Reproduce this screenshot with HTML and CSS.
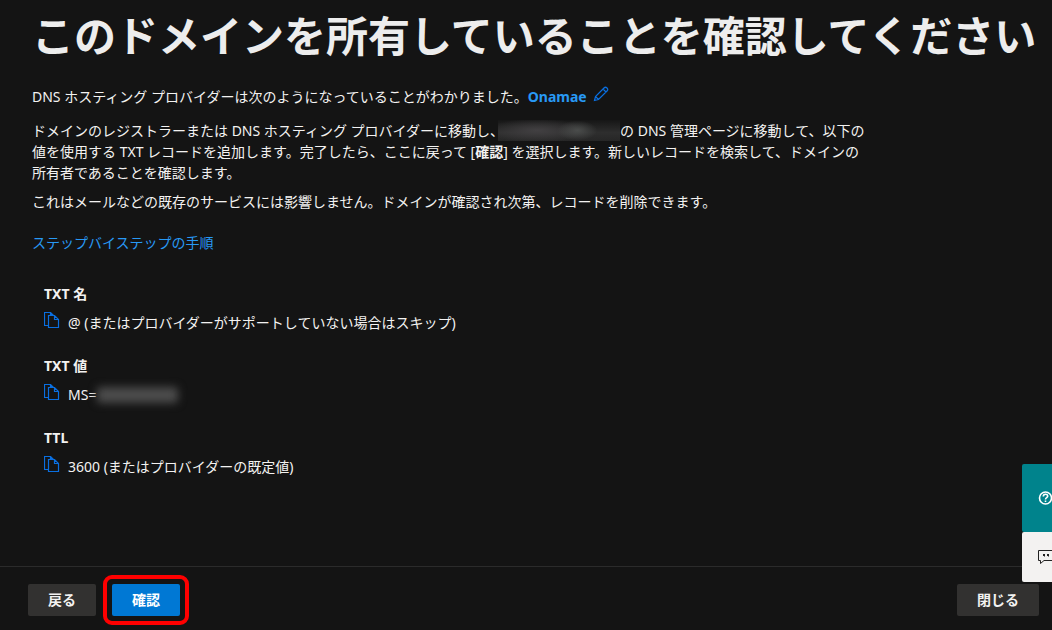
FILE: index.html
```html
<!DOCTYPE html>
<html lang="ja">
<head>
<meta charset="UTF-8">
<meta name="viewport" content="width=device-width, initial-scale=1.0">
<title>ドメインの確認</title>
<link rel="stylesheet" href="styles.css">
</head>
<body>
<svg class="sprite" aria-hidden="true">
    <symbol id="copy" viewBox="0 0 16 16">
        <path d="M4.5 13.500H.5V.5h6l3 3M4.500 3.500h6l4 4v8h-10zM10.500 3.500v4h4M6.500 .5v3" />
    </symbol>
</svg>

<main class="content">
    <h1 class="title">このドメインを所有していることを確認してください</h1>

    <div class="provider">
        <span>DNS ホスティング プロバイダーは次のようになっていることがわかりました。</span>
        <a href="#" class="provider-name">Onamae</a>
        <button type="button" class="icon-btn" aria-label="編集">
            <svg class="icon" viewBox="0 0 16 16"><path d="M1.500 14.500l1-4 8.500-8.500q1.500-1.500 3 0t0 3L5.500 13.500zM2.500 10.500l3 3M10 3l3 3" /></svg>
        </button>
    </div>

    <div class="description">
        <p>ドメインのレジストラーまたは DNS ホスティング プロバイダーに移動し、<span class="masked masked-domain"></span>の DNS 管理ページに移動して、以下の値を使用する TXT レコードを追加します。完了したら、ここに戻って [<b>確認</b>] を選択します。新しいレコードを検索して、ドメインの所有者であることを確認します。</p>
        <p>これはメールなどの既存のサービスには影響しません。ドメインが確認され次第、レコードを削除できます。</p>
    </div>

    <a href="#" class="steps">ステップバイステップの手順</a>

    <dl class="records">
        <div class="record">
            <dt>TXT 名</dt>
            <dd>
                <button type="button" class="icon-btn" aria-label="コピー"><svg class="icon"><use href="#copy" /></svg></button>
                <span class="value">@ (またはプロバイダーがサポートしていない場合はスキップ)</span>
            </dd>
        </div>
        <div class="record">
            <dt>TXT 値</dt>
            <dd>
                <button type="button" class="icon-btn" aria-label="コピー"><svg class="icon"><use href="#copy" /></svg></button>
                <span class="value">MS=<span class="masked masked-value"></span></span>
            </dd>
        </div>
        <div class="record">
            <dt>TTL</dt>
            <dd>
                <button type="button" class="icon-btn" aria-label="コピー"><svg class="icon"><use href="#copy" /></svg></button>
                <span class="value">3600 (またはプロバイダーの既定値)</span>
            </dd>
        </div>
    </dl>
</main>

<footer class="footer">
    <button type="button" class="btn">戻る</button>
    <span class="highlight"><button type="button" class="btn btn-primary">確認</button></span>
    <button type="button" class="btn btn-close">閉じる</button>
</footer>

<aside class="side">
    <button type="button" class="side-btn side-help" aria-label="ヘルプ">
        <svg viewBox="0 0 16 16"><circle cx="7.500" cy="8" r="6" /><path d="M5.300 6.500c0-3 4.400-3 4.400-.3 0 1.500-2.200 1.500-2.200 3.300M7.500 10.600v1.400" /></svg>
    </button>
    <button type="button" class="side-btn side-feedback" aria-label="フィードバック">
        <svg viewBox="0 0 16 16"><path d="M.5 1.500h18v10H6l-3.500 3v-3h-2z" /><path class="dots" d="M5 5h2v2l-1 1V7H5zM9 5h2v2l-1 1V7H9z" /></svg>
    </button>
</aside>
</body>
</html>
```
FILE: styles.css
```css
* {
  box-sizing: border-box;
}

body {
  margin: 0;
  min-height: 100vh;
  display: flex;
  flex-direction: column;
  background-color: #141414;
  color: #f3f2f1;
  font-family: "Noto Sans", "Noto Sans CJK JP", sans-serif;
  font-size: 14px;
  line-height: 21px;
  overflow-x: hidden;
}

button {
  font: inherit;
  border: 0;
  padding: 0;
  cursor: pointer;
}

a {
  color: #2899f5;
  text-decoration: none;
}

.sprite {
  display: none;
}

.content {
  flex: 1;
  padding: 8px 0 24px 32px;
}

.title {
  margin: 0;
  color: #ededed;
  font-size: 42px;
  line-height: 56px;
  font-weight: 700;
  white-space: nowrap;
}

.provider {
  display: flex;
  margin-top: 22px;
}

.provider-name {
  margin-right: 6px;
  font-weight: 700;
}

.icon-btn {
  flex: none;
  width: 16px;
  height: 16px;
  background: none;
}

.icon {
  display: block;
  width: 16px;
  height: 16px;
  fill: none;
  stroke: #0a6fe0;
  stroke-width: 1.2;
}

.description {
  max-width: 840px;
  margin-top: 13px;
}

.description p {
  margin: 0 0 8px;
}

/* blurred out private values */
.masked {
  display: inline-block;
  height: 21px;
  vertical-align: top;
}

.masked-domain {
  width: 122px;
  margin-left: -6px;
  background:
    radial-gradient(ellipse 20px 10px at 65% 50%, #4a4c4b, transparent),
    radial-gradient(ellipse 50px 12px at 32% 50%, #424042, transparent),
    linear-gradient(#161616, #2e2e2e 60%, #262626);
}

.masked-value {
  position: relative;
  width: 86px;
}

.masked-value::before {
  content: "";
  position: absolute;
  inset: 3px 4px 2px 1px;
  border-radius: 4px;
  background-color: #4c4c4c;
  filter: blur(4px);
}

.steps {
  display: inline-block;
  margin-top: 12px;
}

.records {
  margin: 30px 0 0 12px;
}

.record {
  margin-bottom: 22px;
}

.record dt {
  font-weight: 700;
}

.record dd {
  display: flex;
  align-items: flex-start;
  gap: 8px;
  margin: 8px 0 0;
}

.footer {
  display: flex;
  align-items: center;
  gap: 7px;
  height: 64px;
  padding: 2px 13px 0 28px;
  border-top: 1px solid #2b2b2b;
}

.btn {
  min-width: 68px;
  height: 32px;
  padding: 0 20px;
  border-radius: 2px;
  background-color: #323130;
  color: #f3f2f1;
  font-weight: 700;
}

.btn-primary {
  display: block;
  background-color: #0078d4;
  color: #fff;
}

.btn-close {
  margin-left: auto;
}

.highlight {
  padding: 5px;
  border: 4px solid #f00;
  border-radius: 9px;
}

.side {
  position: fixed;
  right: 0;
  bottom: 48px;
  width: 30px;
  overflow: hidden;
}

.side-btn {
  display: flex;
  align-items: center;
  width: 60px;
  padding-left: 16px;
  border-radius: 2px;
}

.side-btn svg {
  width: 16px;
  height: 16px;
  overflow: visible;
  fill: none;
}

.side-help {
  height: 68px;
  background-color: #00838c;
}

.side-help svg {
  stroke: #fff;
  stroke-width: 1.6;
}

.side-feedback {
  height: 50px;
  background-color: #f3f2f1;
}

.side-feedback svg {
  stroke: #222;
}

.side-feedback .dots {
  fill: #222;
  stroke: none;
}
```
